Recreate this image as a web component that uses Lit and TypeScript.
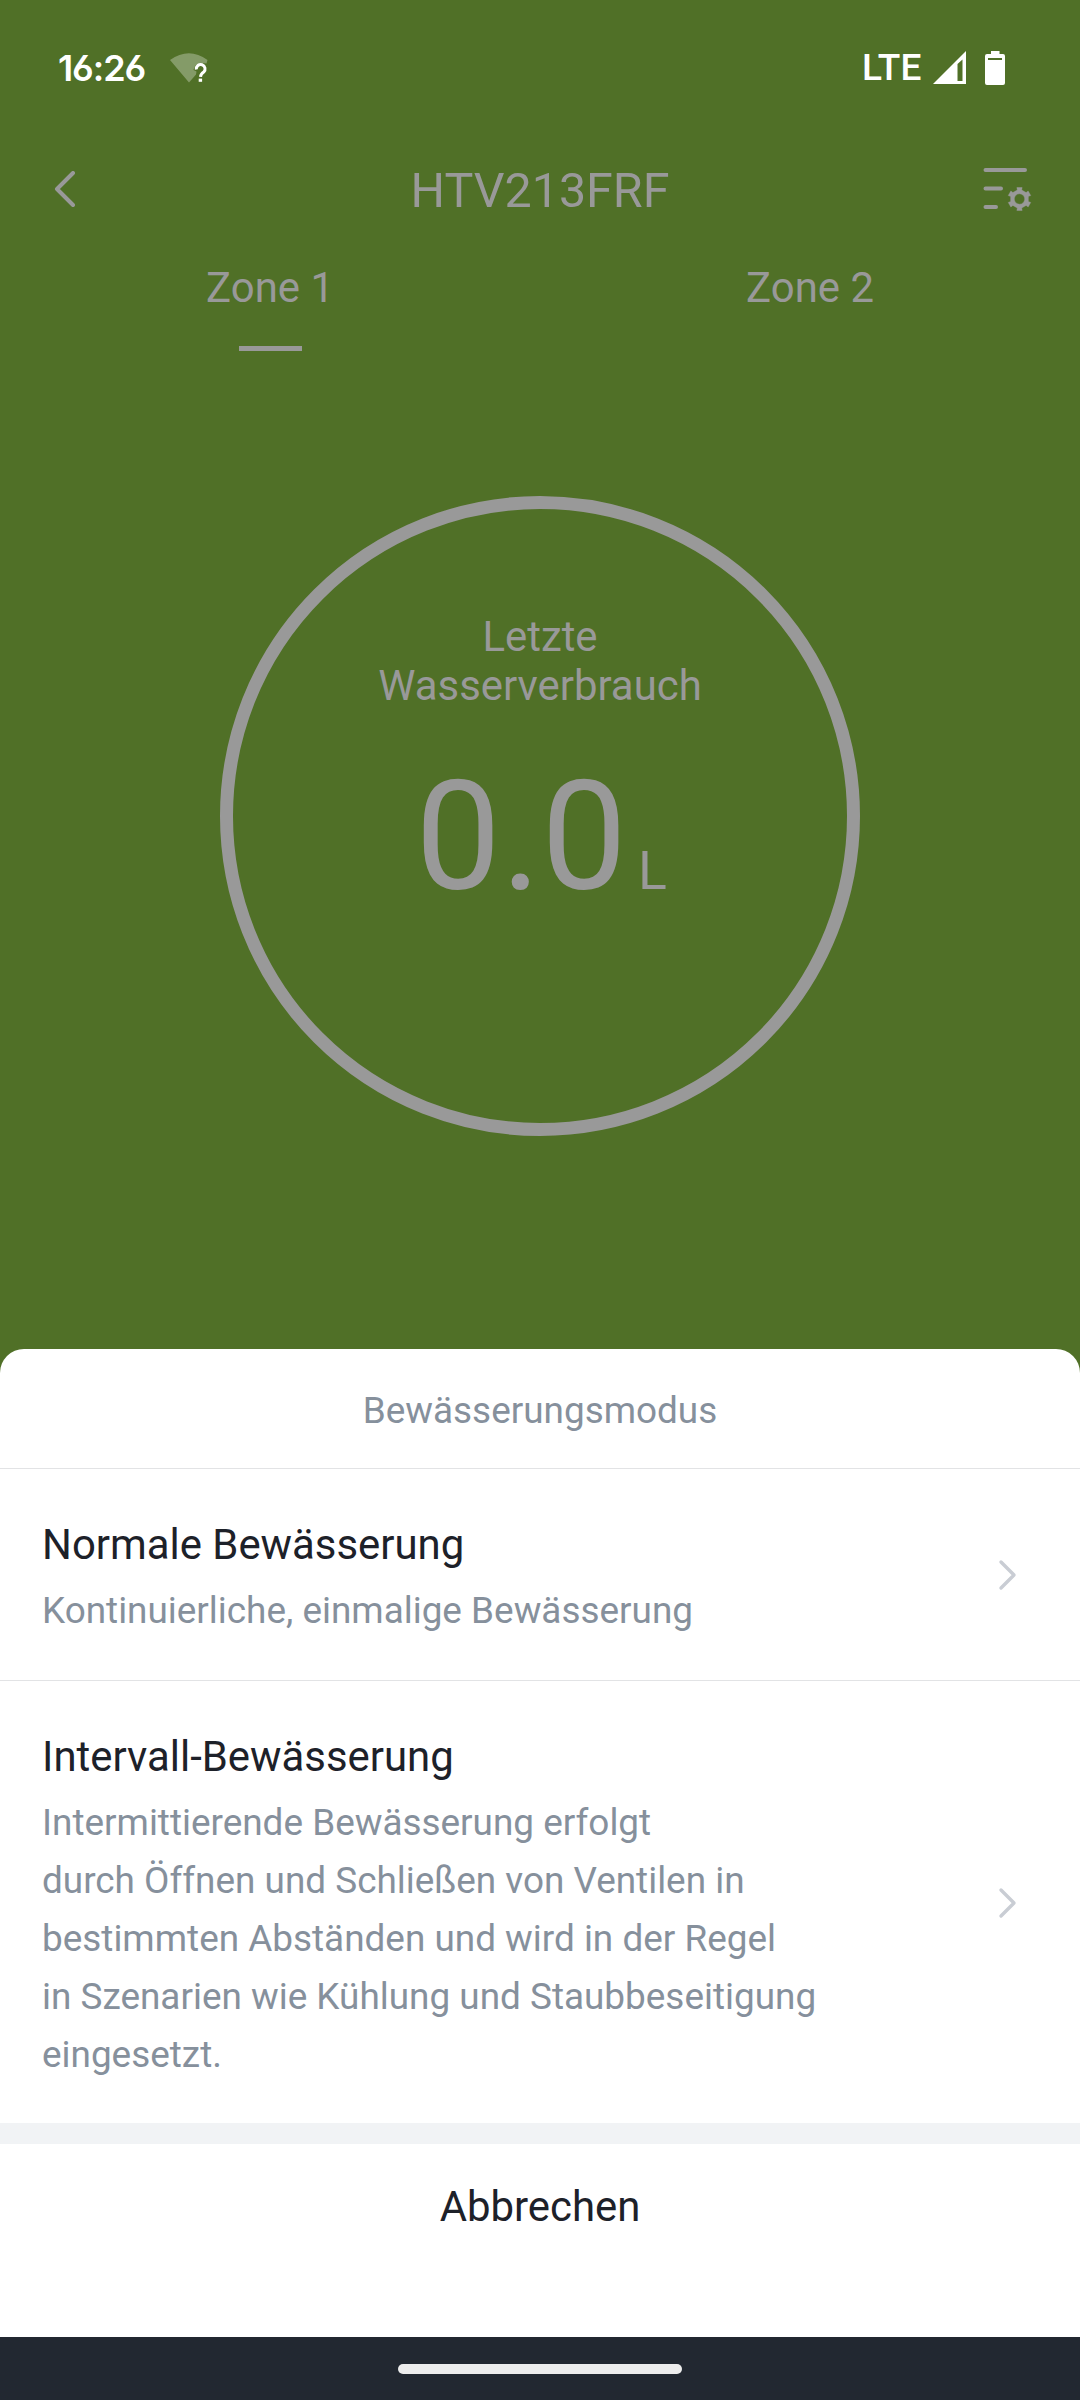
import { LitElement, html, css, svg } from "lit";
import { customElement, property } from "lit/decorators.js";

const GEAR = (() => {
  const pts: string[] = [];
  const cx = 36.5, cy = 31;
  for (let i = 0; i < 6; i++) {
    const a = -90 + i * 60;
    for (const [da, r] of [[-27, 8.9], [-14, 9.2], [-13, 11.8], [13, 11.8], [14, 9.2], [27, 8.9]]) {
      const t = ((a + da) * Math.PI) / 180;
      pts.push(`${(cx + r * Math.cos(t)).toFixed(2)} ${(cy + r * Math.sin(t)).toFixed(2)}`);
    }
  }
  return `M${pts.join("L")}ZM41.7 31a5.2 5.2 0 1 0-10.4 0a5.2 5.2 0 1 0 10.4 0Z`;
})();

@customElement("status-bar")
class StatusBar extends LitElement {
  static styles = css`
    :host { display: flex; align-items: center; justify-content: space-between; height: 136px; color: #fff; box-sizing: border-box; }
    .side { display: flex; align-items: center; }
    .left { padding-left: 58px; }
    .right { padding-right: 75px; }
    .time { font: 600 36px/44px Inter, sans-serif; font-feature-settings: "cv03"; letter-spacing: -1.1px; width: 111px; }
    .lte { font: 500 37px/44px Roboto, sans-serif; letter-spacing: 0.3px; width: 71px; }
    svg { display: block; }
    .signal { margin-right: 19px; }
  `;
  render() {
    return html`
      <div class="side left">
        <span class="time">16:26</span>
        <svg width="40" height="32" viewBox="0 0 40 32">
          <path d="M1 8Q20 -5.5 38.5 8L37.5 11.5Q26 9.5 24.5 18L27.5 19.5L27 22.5L20 30.5Z" fill="#fff" fill-opacity=".3"/>
          <path d="M27.3 17.5a4.4 4.4 0 1 1 7.4 2.6q-3 2-3.2 4.8" fill="none" stroke="#fff" stroke-width="3"/>
          <rect x="29.7" y="26.6" width="3.4" height="3.2" fill="#fff"/>
        </svg>
      </div>
      <div class="side right">
        <span class="lte">LTE</span>
        <svg class="signal" width="33" height="34" viewBox="0 0 33 34">
          <path fill-rule="evenodd" d="M0 33L33 0V33ZM24.5 13V30H29.5V8.5Z" fill="#fff"/>
        </svg>
        <svg width="20" height="34" viewBox="0 0 20 34">
          <path fill-rule="evenodd" d="M6 0H14.5V3H18Q20 3 20 5V32Q20 34 18 34H2Q0 34 0 32V5Q0 3 2 3H6ZM3 7V9H17V7Z" fill="#fff"/>
        </svg>
      </div>`;
  }
}

@customElement("mode-item")
class ModeItem extends LitElement {
  @property() heading = "";
  @property({ attribute: false }) lines: string[] = [];
  static styles = css`
    :host { display: flex; align-items: center; justify-content: space-between; padding: 47px 62px 39px 42px; }
    .title { font-size: 41.9px; line-height: 58px; color: #1d2129; }
    .desc { margin-top: 8px; font-size: 36.9px; line-height: 58px; color: #86909c; }
    .line { display: block; white-space: nowrap; }
    svg { display: block; flex: none; margin-bottom: 7px; }
  `;
  render() {
    return html`
      <div>
        <div class="title">${this.heading}</div>
        <div class="desc">${this.lines.map((l) => html`<span class="line">${l}</span>`)}</div>
      </div>
      <svg width="20" height="32" viewBox="0 0 20 32">
        <path d="M3 3L16 16L3 29" fill="none" stroke="#c9cdd4" stroke-width="3.4" stroke-linecap="round" stroke-linejoin="round"/>
      </svg>`;
  }
}

@customElement("app-root")
class AppRoot extends LitElement {
  static styles = css`
    :host { display: block; width: 1080px; height: 2400px; overflow: hidden; background: #507027; font-family: Roboto, sans-serif; }
    .device { height: 1349px; color: #999; }
    .header { display: flex; align-items: center; justify-content: space-between; height: 109px; padding: 0 47px 0 53px; }
    .header svg { display: block; }
    .name { font-size: 48.4px; line-height: 56px; }
    .slot { display: flex; width: 44px; }
    .slot.end { width: 50px; justify-content: flex-end; }
    .tabs { display: grid; grid-template-columns: 1fr 1fr; height: 106px; }
    .tab { display: flex; flex-direction: column; align-items: center; font-size: 41.9px; line-height: 85px; }
    .mark { width: 63px; height: 5px; margin-top: 16px; background: #999; }
    .ring { box-sizing: border-box; width: 640px; height: 640px; margin: 145px auto 0; padding-top: 103px; border: 13px solid #999; border-radius: 50%; text-align: center; }
    .label { font-size: 41.9px; line-height: 49px; }
    .value { display: flex; justify-content: center; align-items: baseline; margin-top: 39px; padding-left: 2px; line-height: 176px; }
    .num { font-size: 152.5px; }
    .unit { font-size: 53.5px; margin-left: 11px; }
    .sheet { background: #fff; border-radius: 24px 24px 0 0; height: 988px; }
    .caption { box-sizing: border-box; height: 120px; padding-top: 4px; border-bottom: 1px solid #e2e3e5; text-align: center; font-size: 36.9px; line-height: 116px; color: #86909c; }
    .first { padding-bottom: 40px; border-bottom: 1px solid #e2e3e5; }
    .gap { height: 21px; background: #f1f3f5; }
    .cancel { text-align: center; font-size: 41.9px; line-height: 126px; color: #1d2129; }
    .nav { display: flex; align-items: center; justify-content: center; height: 63px; background: #222831; }
    .pill { width: 284px; height: 10px; margin-top: 1px; border-radius: 5px; background: #ededed; }
  `;
  render() {
    return html`
      <div class="device">
        <status-bar></status-bar>
        <div class="header">
          <div class="slot">
            <svg width="24" height="40" viewBox="0 0 24 40">
              <path d="M20 2L4 18L20 34" fill="none" stroke="#999" stroke-width="4" stroke-linecap="round" stroke-linejoin="round"/>
            </svg>
          </div>
          <div class="name">HTV213FRF</div>
          <div class="slot end">
            <svg width="50" height="46" viewBox="0 0 50 46">
              <path d="M2.5 2H42M2.5 20.5H18M2.5 39H13" fill="none" stroke="#999" stroke-width="4" stroke-linecap="round"/>
              ${svg`<path fill-rule="evenodd" d=${GEAR} fill="#999" stroke="#999" stroke-width=".4" stroke-linejoin="round"/>`}
            </svg>
          </div>
        </div>
        <div class="tabs">
          <div class="tab">Zone 1<div class="mark"></div></div>
          <div class="tab">Zone 2</div>
        </div>
        <div class="ring">
          <div class="label">Letzte<br>Wasserverbrauch</div>
          <div class="value"><span class="num">0.0</span><span class="unit">L</span></div>
        </div>
      </div>
      <div class="sheet">
        <div class="caption">Bewässerungsmodus</div>
        <mode-item class="first" heading="Normale Bewässerung" .lines=${["Kontinuierliche, einmalige Bewässerung"]}></mode-item>
        <mode-item heading="Intervall-Bewässerung" .lines=${[
          "Intermittierende Bewässerung erfolgt",
          "durch Öffnen und Schließen von Ventilen in",
          "bestimmten Abständen und wird in der Regel",
          "in Szenarien wie Kühlung und Staubbeseitigung",
          "eingesetzt.",
        ]}></mode-item>
        <div class="gap"></div>
        <div class="cancel">Abbrechen</div>
      </div>
      <div class="nav"><div class="pill"></div></div>`;
  }
}
